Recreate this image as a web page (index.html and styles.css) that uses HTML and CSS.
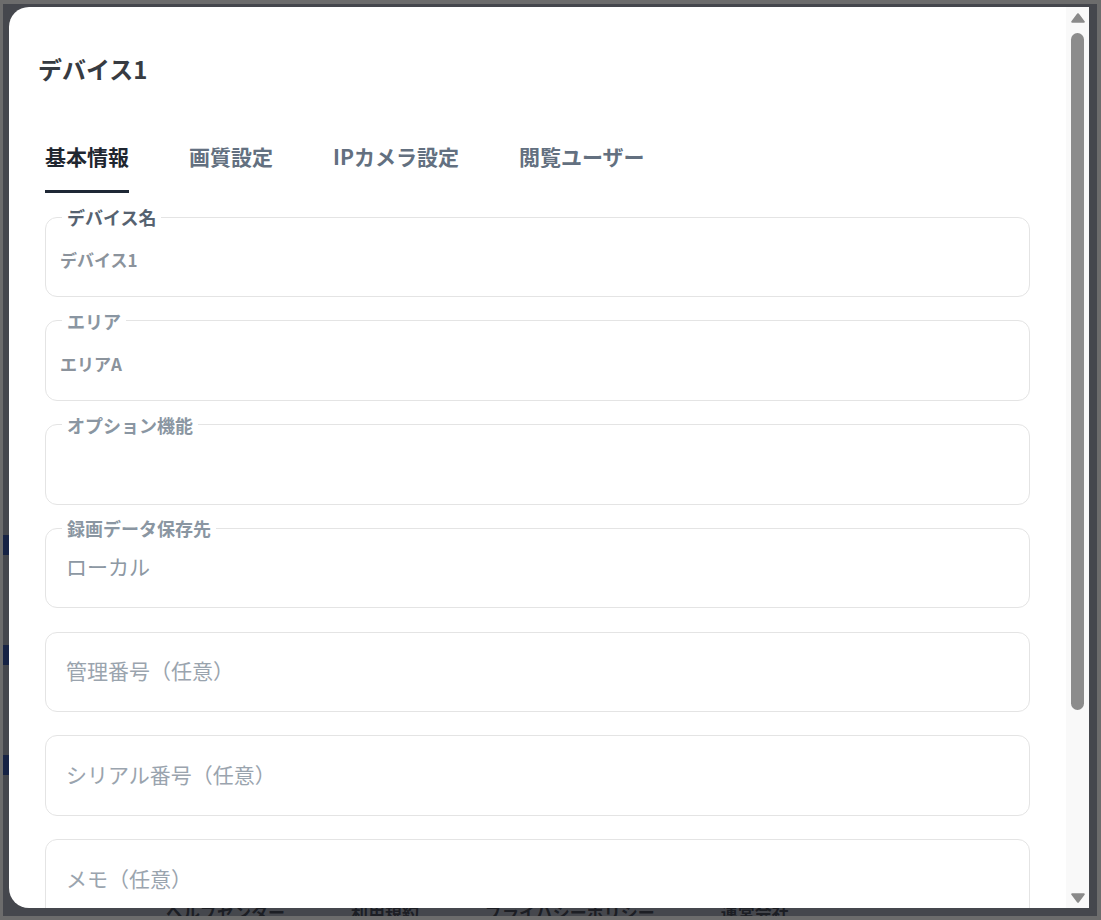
FILE: index.html
```html
<!DOCTYPE html>
<html lang="ja">
<head>
<meta charset="utf-8">
<title>デバイス1</title>
<link rel="stylesheet" href="styles.css">
</head>
<body>
<div class="frame">
  <div class="page">
    <div class="page-main">
      <span class="page-btn"></span>
      <span class="page-btn"></span>
      <span class="page-btn"></span>
    </div>
    <footer class="page-footer">
      <span>ヘルプセンター</span>
      <span>利用規約</span>
      <span>プライバシーポリシー</span>
      <span>運営会社</span>
    </footer>
  </div>
  <div class="overlay">
    <div class="modal">
      <div class="modal-body">
        <h2 class="modal-title">デバイス1</h2>
        <div class="tabs">
          <div class="tab active">基本情報</div>
          <div class="tab">画質設定</div>
          <div class="tab">IPカメラ設定</div>
          <div class="tab">閲覧ユーザー</div>
        </div>
        <div class="fields">
          <fieldset class="field">
            <legend class="label label-strong">デバイス名</legend>
            <div class="field-body value-bold">デバイス1</div>
          </fieldset>
          <fieldset class="field">
            <legend class="label">エリア</legend>
            <div class="field-body value-bold">エリアA</div>
          </fieldset>
          <fieldset class="field">
            <legend class="label">オプション機能</legend>
            <div class="field-body"></div>
          </fieldset>
          <fieldset class="field">
            <legend class="label">録画データ保存先</legend>
            <div class="field-body value-text">ローカル</div>
          </fieldset>
          <fieldset class="field">
            <legend class="label label-empty"></legend>
            <div class="field-body value-text placeholder">管理番号（任意）</div>
          </fieldset>
          <fieldset class="field">
            <legend class="label label-empty"></legend>
            <div class="field-body value-text placeholder">シリアル番号（任意）</div>
          </fieldset>
          <fieldset class="field">
            <legend class="label label-empty"></legend>
            <div class="field-body value-text placeholder">メモ（任意）</div>
          </fieldset>
        </div>
      </div>
      <div class="scrollbar">
        <svg class="sb-arrow sb-up" width="14" height="10" viewBox="0 0 14 10"><path d="M7 1.2 L12.8 8.8 L1.2 8.8 Z"/></svg>
        <div class="sb-thumb"></div>
        <div class="sb-space"></div>
        <svg class="sb-arrow sb-down" width="14" height="10" viewBox="0 0 14 10"><path d="M1.2 1.2 L12.8 1.2 L7 8.8 Z"/></svg>
      </div>
    </div>
  </div>
</div>
</body>
</html>
```
FILE: styles.css
```css
* { box-sizing: border-box; }

html, body {
  margin: 0;
  padding: 0;
}

body {
  width: 1101px;
  height: 920px;
  background: #6c6c6c;
  padding: 4px 4px 4px 3px;
  font-family: "Noto Sans CJK JP", "Noto Sans", sans-serif;
  overflow: hidden;
}

.frame {
  position: relative;
  width: 1094px;
  height: 912px;
  background: #ffffff;
  overflow: hidden;
}

.page {
  height: 100%;
  display: flex;
  flex-direction: column;
}

.page-main {
  flex: 1;
  display: flex;
  flex-direction: column;
  gap: 90px;
  padding-top: 531px;
}

.page-btn {
  display: block;
  width: 40px;
  height: 20px;
  background: #1d4ed8;
}

.page-footer {
  display: flex;
  gap: 66px;
  padding-left: 163px;
  margin-bottom: -8px;
  font-size: 17px;
  font-weight: 700;
  line-height: 24px;
  color: #333333;
}

.overlay {
  position: absolute;
  inset: 0;
  background: rgba(22, 25, 33, 0.8);
  padding: 3px 8px 8px 6px;
}

.modal {
  width: 1080px;
  height: 901px;
  background: #ffffff;
  border-radius: 20px 0 0 20px;
  overflow: hidden;
  display: flex;
}

.modal-body {
  flex: 1;
  min-width: 0;
  padding: 47px 36px 0 36px;
  overflow: hidden;
}

.modal-title {
  margin: 0 0 0 -7px;
  font-size: 24px;
  line-height: 30px;
  font-weight: 700;
  color: #373b41;
}

.tabs {
  display: flex;
  gap: 60px;
  margin-top: 58px;
}

.tab {
  font-size: 21px;
  line-height: 28px;
  font-weight: 700;
  color: #637080;
  padding-bottom: 20px;
  border-bottom: 3px solid transparent;
}

.tab.active {
  color: #1f2630;
  border-bottom-color: #1e2835;
}

.fields {
  display: flex;
  flex-direction: column;
  gap: 13.8px;
  margin-top: 14px;
}

.field {
  margin: 0;
  min-width: 0;
  padding: 0 14px;
  border: 1px solid #e4e4e4;
  border-radius: 12px;
}

.label {
  margin-left: 2px;
  padding: 0 5px;
  font-size: 18px;
  line-height: 20px;
  font-weight: 700;
  color: #8a96a2;
}

.label-strong {
  color: #566270;
}

.label-empty {
  padding: 0;
  margin-left: 0;
  height: 20px;
}

.field-body {
  height: 69px;
}

.value-bold {
  padding-top: 21px;
  font-size: 17px;
  line-height: 24px;
  font-weight: 700;
  color: #8b939c;
}

.value-text {
  padding-top: 14px;
  padding-left: 6px;
  font-size: 21px;
  line-height: 28px;
  font-weight: 400;
  color: #8d98a3;
}

.placeholder {
  color: #9aa4ae;
}

.scrollbar {
  width: 23px;
  flex: none;
  background: #f9f9f9;
  display: flex;
  flex-direction: column;
  align-items: center;
  padding: 6px 0 5px 0;
}

.sb-arrow {
  display: block;
  flex: none;
}

.sb-arrow path {
  fill: #8a8a8a;
  stroke: #8a8a8a;
  stroke-width: 2;
  stroke-linejoin: round;
}

.sb-thumb {
  width: 13px;
  height: 677px;
  margin-top: 10px;
  border-radius: 7px;
  background: #8c8c8c;
  flex: none;
}

.sb-space {
  flex: 1;
}
```
